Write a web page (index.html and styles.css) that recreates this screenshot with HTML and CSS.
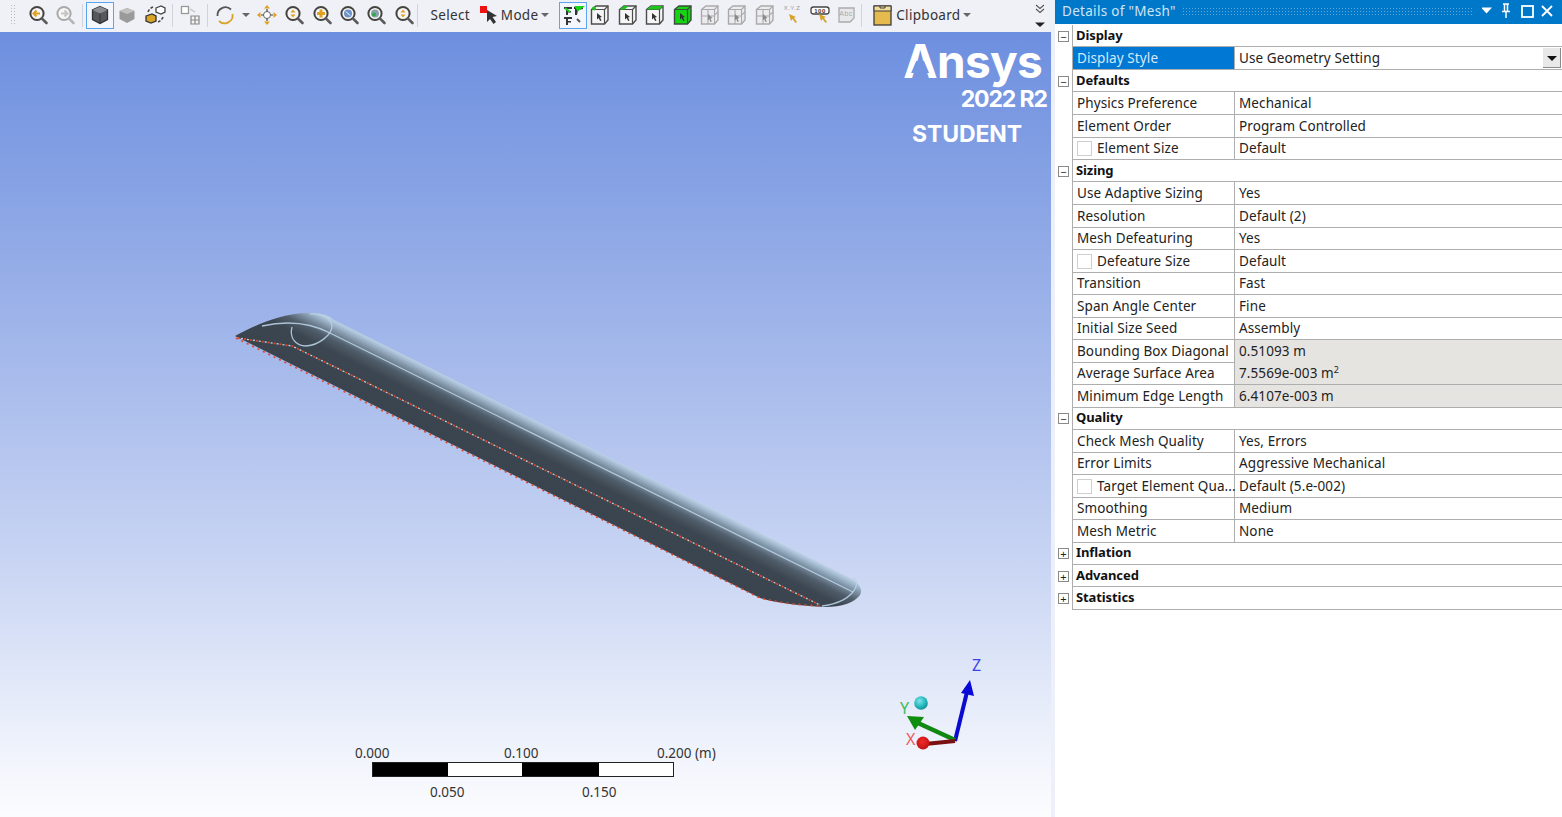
FILE: index.html
```html
<!DOCTYPE html>
<html lang="en">
<head>
<meta charset="utf-8">
<title>Details of "Mesh"</title>
<link rel="stylesheet" href="styles.css">
</head>
<body>
<svg class="defs" width="0" height="0" aria-hidden="true">
  <defs>
    <symbol id="mag" viewBox="0 0 24 24">
      <circle cx="11" cy="10.5" r="6.6" fill="#f6f6f6" stroke="#45433f" stroke-width="2"/>
      <path d="M15.8 15.3 20.5 20" stroke="#5a5a5a" stroke-width="2.6" stroke-linecap="round"/>
    </symbol>
    <symbol id="magg" viewBox="0 0 24 24">
      <circle cx="11" cy="10.5" r="6.6" fill="#f6f6f6" stroke="#a9a9a9" stroke-width="2"/>
      <path d="M15.8 15.3 20.5 20" stroke="#b5b5b5" stroke-width="2.6" stroke-linecap="round"/>
    </symbol>
    <symbol id="cq" viewBox="0 0 24 24">
      <path d="M3.5 6.5 8 3h12v14l-3.5 4h-13z" fill="#f6f6f8" stroke="#4c4c4c" stroke-width="1.4"/>
      <path d="M3.5 6.5h13V21M16.5 6.5 20 3" fill="none" stroke="#4c4c4c" stroke-width="1.2"/>
      <path d="M9 10l5 4-2 .5 1.5 3-1.4.6-1.4-3-1.700 1.400z" fill="#333"/>
    </symbol>
    <symbol id="cw" viewBox="0 0 24 24">
      <path d="M3.500 6.500 8 3h12v14l-3.500 4h-13z" fill="#ececf0" stroke="#aaa" stroke-width="1.400"/>
      <path d="M3.500 6.500h13V21M16.500 6.500 20 3M3.500 13h13M10 6.500V21M16.500 12 20 9" fill="none" stroke="#aaa" stroke-width="1.100"/>
      <path d="M10 11l4.500 4-2 .5 1.300 3-1.300.5-1.300-3-1.400 1.400z" fill="#888"/>
    </symbol>
  </defs>
</svg>

<div class="app">
  <section class="left">
    <div class="toolbar">
      <span class="grip"></span>
      <span class="tool"><svg class="ico"><use href="#mag"/><path d="M14 10.500H8M10.500 7.500 7.500 10.500l3 3" fill="none" stroke="#e0a020" stroke-width="2"/></svg></span>
      <span class="tool"><svg class="ico"><use href="#magg"/><path d="M8 10.500h6M11.500 7.500l3 3-3 3" fill="none" stroke="#c4c4c4" stroke-width="2"/></svg></span>
      <span class="sep"></span>
      <span class="tool on"><svg class="ico"><path d="M12 3.500 19.500 7v9.500L12 20.500 4.500 16.500V7z" fill="#55585c" stroke="#333" stroke-width="1.300"/><path d="M4.500 7 12 10.500 19.500 7 12 3.500z" fill="#8a8d92"/><path d="M12 10.500v10" stroke="#333"/></svg></span>
      <span class="tool"><svg class="ico"><path d="M12 5 19.500 8v8L12 20 4.500 16V8z" fill="#9a9a9a"/><path d="M4.500 8 12 11 19.500 8 12 5z" fill="#c2c2c2"/></svg></span>
      <span class="tool"><svg class="ico"><path d="M13 5l5-2 4 2v4l-4 2-5-2z" fill="#fff" stroke="#444" stroke-width="1.300"/><path d="M3 13l6-2 4 2v5l-5 2-5-2z" fill="#d8a428" stroke="#333" stroke-width="1.300"/><path d="M5 9a8 8 0 0 1 5-5M20 14a8 8 0 0 1-5 5" fill="none" stroke="#444" stroke-width="1.500" stroke-dasharray="3 1.500"/></svg></span>
      <span class="sep"></span>
      <span class="tool"><svg class="ico"><rect x="3.500" y="3.500" width="7" height="7" fill="#fff" stroke="#999" stroke-width="1.300"/><path d="M12 6l5 3" stroke="#ccc" stroke-width="1.500"/><path d="M13 13h8v8h-8zM17 13v8M13 17h8" fill="#f4f4f4" stroke="#888" stroke-width="1.200"/></svg></span>
      <span class="sep"></span>
      <span class="tool"><svg class="ico"><path d="M4.500 13A8 8 0 0 1 18 6.500" fill="none" stroke="#555" stroke-width="1.800"/><path d="M19.500 11A8 8 0 0 1 6 18" fill="none" stroke="#d8a428" stroke-width="1.800"/></svg></span>
      <span class="caret-tool"><i class="caret"></i></span>
      <span class="tool"><svg class="ico"><path d="M12 2l3 3.500H9zM12 22l3-3.500H9zM2 12l3.500-3v6zM22 12l-3.500-3v6z" fill="#e0a020"/><circle cx="12" cy="12" r="3.500" fill="#fff" stroke="#666"/><path d="M12 6v2.500M12 15.500V18M6 12h2.500M15.500 12H18" stroke="#444" stroke-width="1.200"/></svg></span>
      <span class="tool"><svg class="ico"><use href="#mag"/><path d="M11 6.500 13.500 9.500h-5zM11 14.500l2.500-3h-5z" fill="#e0a020"/></svg></span>
      <span class="tool"><svg class="ico"><use href="#mag"/><path d="M11 6.500v8M7 10.500h8" stroke="#e0a020" stroke-width="3"/></svg></span>
      <span class="tool"><svg class="ico"><use href="#mag"/><circle cx="11" cy="10.500" r="4" fill="#6f93c9"/><path d="M9 8.500l4 4" stroke="#fff"/></svg></span>
      <span class="tool"><svg class="ico"><use href="#mag"/><circle cx="11" cy="10.500" r="4" fill="#8aa0ac"/><circle cx="10" cy="11.500" r="2" fill="#2fa84f"/></svg></span>
      <span class="tool"><svg class="ico"><use href="#mag"/><path d="M11 6.500 13.500 9.500h-5zM11 14.500l2.500-3h-5z" fill="#e0a020"/></svg></span>
      <span class="sep wide"></span>
      <span class="label select">Select</span>
      <span class="mode-ico"><svg class="ico"><rect x="2" y="3" width="7" height="7" fill="#ee1111"/><path d="M9 7l10 6-4.500 1 3.500 5-2.500 2-3.500-5-3 3z" fill="#333"/></svg></span>
      <span class="label">Mode</span><span class="caret-tool tight"><i class="caret"></i></span>
      <span class="tool on last"><svg class="ico"><path d="M3 4h8v2H7v2h3v1.500H7V12H5V6H3zM13 4h9v2l-5 1-1 5h-2V6h-1zM3 14h8v2H7v2h3v1.500H7V22H5v-6H3z" fill="#333"/><path d="M4 5l5 4M15 4h6l-4 3z" stroke="#15d615" stroke-width="2" fill="#15d615"/><path d="M16 16l3 3" stroke="#555" stroke-width="2"/></svg></span>
      <span class="tool"><svg class="ico"><use href="#cq"/><circle cx="6" cy="5.500" r="2" fill="#1cc41c"/></svg></span>
      <span class="tool"><svg class="ico"><use href="#cq"/><path d="M3.500 6.500 8 3h5L8.500 6.500z" fill="#1cc41c"/></svg></span>
      <span class="tool"><svg class="ico"><use href="#cq"/><path d="M3.500 6.500 8 3h12l-3.500 3.500z" fill="#1cc41c"/></svg></span>
      <span class="tool"><svg class="ico"><path d="M3.500 6.500 8 3h12v14l-3.500 4h-13z" fill="#14d414" stroke="#3c4c3c" stroke-width="1.400"/><path d="M3.500 6.500h13V21M16.500 6.500 20 3" fill="none" stroke="#3c4c3c" stroke-width="1.200"/><path d="M9 10l5 4-2 .5 1.500 3-1.400.6-1.400-3-1.700 1.400z" fill="#333"/></svg></span>
      <span class="tool"><svg class="ico"><use href="#cw"/></svg></span>
      <span class="tool"><svg class="ico"><use href="#cw"/></svg></span>
      <span class="tool"><svg class="ico"><use href="#cw"/></svg></span>
      <span class="tool"><svg class="ico"><text class="xyz" x="12" y="7" text-anchor="middle">X.Y.Z</text><path d="M9 11l2 7 1.500-2 3 4 1.500-1-3-4 2-1z" fill="#d8a428"/></svg></span>
      <span class="tool"><svg class="ico"><rect x="3" y="4" width="18" height="7" rx="2.500" fill="#fff" stroke="#444" stroke-width="1.300"/><text class="xyz dark" x="12" y="9.500" text-anchor="middle">100</text><path d="M11 11l2 7 1.500-2 3 4 1.500-1-3-4 2-1z" fill="#d8a428"/></svg></span>
      <span class="tool"><svg class="ico"><path d="M4 5h15v10l-4 4H4z" fill="#e8e8ec" stroke="#aaa" stroke-width="1.300"/><text class="xyz gray" x="11" y="13" text-anchor="middle">Abc</text><path d="M15 19l4-4" stroke="#aaa"/></svg></span>
      <span class="sep flush"></span>
      <span class="clip-ico"><svg class="ico"><rect x="3" y="3" width="17" height="19" fill="#e5bb4f" stroke="#3d3d3d" stroke-width="1.300"/><path d="M3 3h17v5H3z" fill="#f2dc9a" stroke="#3d3d3d"/><path d="M9 3v2h5V3" fill="none" stroke="#3d3d3d"/></svg></span>
      <span class="label clip">Clipboard</span><span class="caret-tool tight"><i class="caret"></i></span>
      <span class="overflow">
        <svg class="ov" width="12" height="27"><path d="M2 3l4 3.500L10 3M2 7l4 3.500L10 7" fill="none" stroke="#555" stroke-width="1.100"/><path d="M1 20.500h10l-5 4.500z" fill="#222"/></svg>
      </span>
    </div>

    <div class="viewport">
      <svg class="scene" viewBox="0 32 1051 785">
        <defs>
          <linearGradient id="wingGrad" gradientUnits="userSpaceOnUse" x1="500" y1="469" x2="527" y2="415">
            <stop offset="0" stop-color="#3a444e"/>
            <stop offset=".5" stop-color="#3c4650"/>
            <stop offset=".68" stop-color="#505d6a"/>
            <stop offset=".82" stop-color="#7d91a4"/>
            <stop offset=".93" stop-color="#a9c0d6"/>
            <stop offset="1" stop-color="#c6d8ea"/>
          </linearGradient>
          <radialGradient id="cyanBall" cx=".4" cy=".35" r=".7">
            <stop offset="0" stop-color="#7fe6e8"/>
            <stop offset=".6" stop-color="#25b8bd"/>
            <stop offset="1" stop-color="#128a90"/>
          </radialGradient>
          <radialGradient id="redBall" cx=".45" cy=".4" r=".7">
            <stop offset="0" stop-color="#f22a2a"/>
            <stop offset="1" stop-color="#b80f0f"/>
          </radialGradient>
        </defs>
        <g class="model">
          <path class="wing" d="M235 336C255 325 281 314 305 313 C320 312 328 315 334 320 L852 579C860 584 863 590 860 595 C854 603 842 607 825 607 C800 606 775 603 760 598Z"/>
          <path class="bright" d="M262 326C280 322 305 320 330 333L853 592"/>
          <path class="bright" d="M292 327C289 338 296 346 306 346 C320 345 332 334 332 326C331 319 322 313 310 314"/>
          <path class="bright" d="M853 592C858 585 858 580 852 578M853 592 C848 598 838 604 822 606"/>
          <path class="edge-under" d="M238 338 292 346 820 605"/>
          <path class="edge" d="M236 338 760 598C780 603 800 605 820 606"/>
          <path class="edge" d="M238 338 292 346 820 605"/>
        </g>
        <g class="triad">
          <path d="M955 741 967 692" stroke="#0a0ad0" stroke-width="4"/>
          <path d="M970 680 974 696 961 693z" fill="#0808d8"/>
          <path d="M955 740 918 723" stroke="#118811" stroke-width="4.500"/>
          <path d="M907 716 924 717 915 730z" fill="#0f8f0f"/>
          <path d="M955 741 925 744" stroke="#7a1010" stroke-width="4"/>
          <circle cx="923" cy="743" r="6.500" fill="url(#redBall)"/>
          <circle cx="921" cy="703" r="6.800" fill="url(#cyanBall)"/>
          <text class="ax z" x="972" y="671">Z</text>
          <text class="ax y" x="900" y="714">Y</text>
          <text class="ax x" x="906" y="745">X</text>
        </g>
      </svg>

      <div class="brand">
        <div class="ansys"><span class="a">A</span>nsys</div>
        <div class="rel">2022 R2</div>
        <div class="student">STUDENT</div>
      </div>

      <div class="scale">
        <div class="ticks top"><span>0.000</span><span>0.100</span><span>0.200<em> (m)</em></span></div>
        <div class="bar"><i></i><i></i><i></i><i></i></div>
        <div class="ticks bottom"><span>0.050</span><span>0.150</span></div>
      </div>
    </div>
  </section>

  <aside class="panel">
    <header class="title">
      <span class="title-text">Details of "Mesh"</span>
      <span class="dots"></span>
      <svg class="wbtn" width="80" height="24" viewBox="0 0 80 24"><path d="M-1 8.500h11l-5.500 6z" fill="#fff"/><path d="M21 5h6M22.500 5v7M25.500 5v7M20 12.500h8M24 13v6" fill="none" stroke="#fff" stroke-width="1.500"/><rect x="40" y="7" width="11" height="11" fill="none" stroke="#fff" stroke-width="1.800"/><path d="M60 7l10 10M70 7 60 17" stroke="#fff" stroke-width="1.800"/></svg>
    </header>
    <div class="grid">
      <div class="row head"><span class="tog">−</span><b>Display</b></div>
      <div class="row sel"><span class="gut"></span><span class="k">Display Style</span><span class="v">Use Geometry Setting<i class="drop"></i></span></div>
      <div class="row head"><span class="tog">−</span><b>Defaults</b></div>
      <div class="row"><span class="gut"></span><span class="k">Physics Preference</span><span class="v">Mechanical</span></div>
      <div class="row"><span class="gut"></span><span class="k">Element Order</span><span class="v">Program Controlled</span></div>
      <div class="row"><span class="gut"></span><span class="k"><i class="chk"></i>Element Size</span><span class="v">Default</span></div>
      <div class="row head"><span class="tog">−</span><b>Sizing</b></div>
      <div class="row"><span class="gut"></span><span class="k">Use Adaptive Sizing</span><span class="v">Yes</span></div>
      <div class="row"><span class="gut"></span><span class="k">Resolution</span><span class="v">Default (2)</span></div>
      <div class="row"><span class="gut"></span><span class="k">Mesh Defeaturing</span><span class="v">Yes</span></div>
      <div class="row"><span class="gut"></span><span class="k"><i class="chk"></i>Defeature Size</span><span class="v">Default</span></div>
      <div class="row"><span class="gut"></span><span class="k">Transition</span><span class="v">Fast</span></div>
      <div class="row"><span class="gut"></span><span class="k">Span Angle Center</span><span class="v">Fine</span></div>
      <div class="row"><span class="gut"></span><span class="k">Initial Size Seed</span><span class="v">Assembly</span></div>
      <div class="row ro"><span class="gut"></span><span class="k">Bounding Box Diagonal</span><span class="v">0.51093 m</span></div>
      <div class="row ro"><span class="gut"></span><span class="k">Average Surface Area</span><span class="v">7.5569e-003 m<sup>2</sup></span></div>
      <div class="row ro"><span class="gut"></span><span class="k">Minimum Edge Length</span><span class="v">6.4107e-003 m</span></div>
      <div class="row head"><span class="tog">−</span><b>Quality</b></div>
      <div class="row"><span class="gut"></span><span class="k">Check Mesh Quality</span><span class="v">Yes, Errors</span></div>
      <div class="row"><span class="gut"></span><span class="k">Error Limits</span><span class="v">Aggressive Mechanical</span></div>
      <div class="row"><span class="gut"></span><span class="k"><i class="chk"></i>Target Element Qua...</span><span class="v">Default (5.e-002)</span></div>
      <div class="row"><span class="gut"></span><span class="k">Smoothing</span><span class="v">Medium</span></div>
      <div class="row"><span class="gut"></span><span class="k">Mesh Metric</span><span class="v">None</span></div>
      <div class="row head"><span class="tog">+</span><b>Inflation</b></div>
      <div class="row head"><span class="tog">+</span><b>Advanced</b></div>
      <div class="row head"><span class="tog">+</span><b>Statistics</b></div>
    </div>
  </aside>
</div>
</body>
</html>
```

FILE: styles.css
```css
* { box-sizing: border-box; }
html, body { margin: 0; height: 100%; overflow: hidden; background: #fff; }
body { font-family: "Noto Sans", "DejaVu Sans", sans-serif; font-size: 13px; color: #222; }
.defs { position: absolute; }
.app { display: grid; grid-template-columns: 1051px 4px 1fr; width: 1562px; height: 817px; background: #eef0f9; }
.left { display: flex; flex-direction: column; min-width: 0; }
.panel { grid-column: 3; background: #fff; display: flex; flex-direction: column; }

/* toolbar */
.toolbar { height: 32px; flex: none; display: flex; align-items: center; background: #f0f0f7; padding: 0 0 2px 10px; font-size: 13.500px; color: #333; letter-spacing: .3px; }
.grip { width: 7px; height: 22px; margin-right: 7px; background-image: radial-gradient(#bbb 40%, transparent 45%); background-size: 3px 3px; }
.tool { width: 27.400px; height: 27px; flex: none; display: flex; align-items: center; justify-content: center; border: 1px solid transparent; }
.tool.on { border: 1.500px solid #5aa5ee; background: #f3f6fc; }
.tool.last { margin-left: 7px; }
.ico { width: 24px; height: 24px; display: block; }
.sep { width: 1px; height: 23px; margin: 0 3.250px; background: #d2d2da; flex: none; }
.sep.wide { margin: 0 13px 0 -1px; }
.sep.flush { margin: 0; }
.caret-tool { width: 15px; display: flex; justify-content: center; flex: none; }
.caret-tool.tight { width: 14px; }
.caret { width: 0; height: 0; border: 4px solid transparent; border-top: 4px solid #666; border-bottom: 0; display: block; }
.label { white-space: nowrap; flex: none; }
.select { margin-right: 8px; }
.mode-ico { width: 24px; flex: none; margin-right: -1px; }
.clip-ico { width: 24px; flex: none; margin: 0 1px 0 9.600px; }
.overflow { margin-left: auto; margin-right: 5px; flex: none; }
.ov { display: block; }
.xyz { font-family: "Liberation Sans", sans-serif; font-size: 6px; fill: #999; letter-spacing: .5px; }
.xyz.dark { fill: #333; font-weight: 700; }
.xyz.gray { fill: #aaa; font-size: 7px; }

/* 3D viewport */
.viewport { position: relative; flex: 1; overflow: hidden; background: linear-gradient(180deg, #6d8fdf 0%, #9db3e9 36%, #c9d5f3 68%, #f2f5fc 93%, #fbfcfe 100%); }
.scene { position: absolute; inset: 0; width: 100%; height: 100%; display: block; }
.model { filter: blur(.3px); }
.wing { fill: url(#wingGrad); }
.bright { fill: none; stroke: #b7d0e4; stroke-width: 1.300; opacity: .9; }
.edge { fill: none; stroke: #e0482c; stroke-width: 1.700; stroke-dasharray: 2 4; }
.edge-under { fill: none; stroke: #c4cdd6; stroke-width: 1.300; stroke-dasharray: 2 4; stroke-dashoffset: 3; }
.ax { font-family: "Noto Sans", sans-serif; font-size: 16px; }
.ax.z { fill: #3a44ee; }
.ax.y { fill: #3cbb5c; }
.ax.x { fill: #ee5a5a; }

.brand { position: absolute; top: 4px; right: 4px; width: 150px; color: #fff; font-family: "Inter", "Liberation Sans", sans-serif; font-weight: 700; display: flex; flex-direction: column; }
.ansys { font-size: 46px; line-height: 50px; letter-spacing: -.7px; text-align: right; margin-right: 5px; }
.a { position: relative; display: inline-block; }
.a::after { content: ""; position: absolute; left: 50%; top: 25px; width: 18px; height: 12px; margin-left: -9px; background: #7394e1; clip-path: polygon(28% 0, 72% 0, 100% 100%, 0 100%); }
.rel { font-size: 23px; line-height: 26px; letter-spacing: -1.100px; text-align: right; }
.student { font-size: 23px; line-height: 26px; letter-spacing: -.1px; margin: 9px 0 0 15px; }

.scale { position: absolute; left: 372px; top: 711px; width: 302px; font-size: 13.500px; color: #333; }
.ticks { position: relative; height: 19px; line-height: 19px; }
.ticks span { position: absolute; top: 1px; white-space: nowrap; }
.ticks em { font-style: normal; }
.top span:nth-child(1) { left: -17px; }
.top span:nth-child(2) { left: 132px; }
.top span:nth-child(3) { left: 285px; }
.bottom { margin-top: 5px; }
.bottom span:nth-child(1) { left: 58px; }
.bottom span:nth-child(2) { left: 210px; }
.bar { display: grid; grid-template-columns: 75px 74px 77px 1fr; height: 15px; border: 1px solid #222; }
.bar i { background: #fff; }
.bar i:nth-child(odd) { background: #000; }

/* details */
.title { height: 24px; flex: none; background: #0078c9; display: flex; align-items: center; padding: 0 0 2px 7px; color: #cfe4f5; font-size: 13.500px; letter-spacing: .3px; white-space: nowrap; }
.dots { flex: 1; height: 10px; margin: 2px 8px 0 6px; background-image: radial-gradient(#5fa8dc 35%, transparent 40%); background-size: 3px 3px; }
.wbtn { flex: none; display: block; }
.grid { display: grid; grid-auto-rows: 22.500px; margin-top: .5px; }
.row { display: grid; grid-template-columns: 17px 163px 1fr; font-size: 13.500px; letter-spacing: .1px; line-height: 22px; white-space: nowrap; }
.gut { background: #fff; }
.k, .v { border-bottom: 1px solid #aeaeae; min-width: 0; position: relative; }
.k { border-left: 1px solid #aeaeae; border-right: 1px solid #aeaeae; padding-left: 4px; }
.v { padding-left: 4px; }
.row.sel .k { background: #0078d4; color: #d5e9fb; }
.row.ro .v { background: #e6e4e0; }
.head { grid-template-columns: 17px 1fr; }
.head b { border-left: 1px solid #aeaeae; border-bottom: 1px solid #aeaeae; padding-left: 3px; font-size: 13px; line-height: 21px; letter-spacing: -.1px; font-weight: 700; color: #111; }
.tog { width: 11px; height: 11px; margin: 6px 0 0 3px; border: 1px solid #8a8a8a; font-size: 11px; line-height: 9px; text-align: center; color: #222; letter-spacing: 0; }
.chk { display: inline-block; width: 15px; height: 15px; margin-right: 5px; border: 1px solid #cfcfcf; vertical-align: -3px; }
.drop { position: absolute; right: 1px; top: 1px; width: 18px; height: 20px; background: #e8e8e8; border-right: 1px solid #8a8a8a; border-bottom: 1px solid #8a8a8a; }
.drop::after { content: ""; position: absolute; left: 4px; top: 8px; border: 5px solid transparent; border-top: 5px solid #111; border-bottom: 0; }
sup { font-size: 9px; line-height: 0; }
```
